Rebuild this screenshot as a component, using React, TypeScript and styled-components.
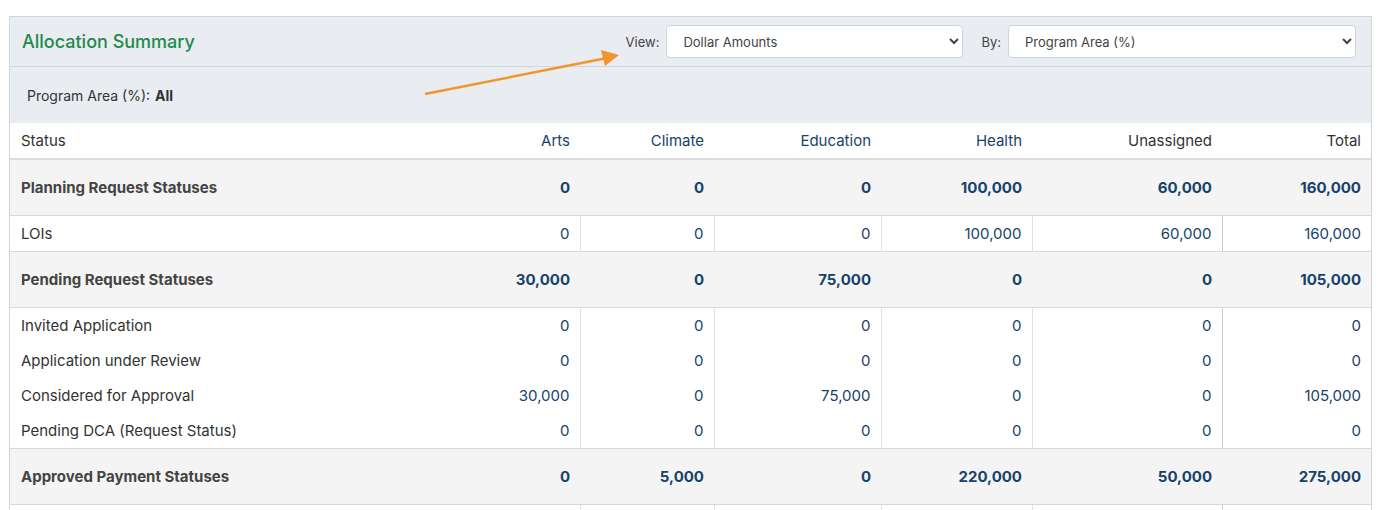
import styled, { createGlobalStyle } from 'styled-components';

const Global = createGlobalStyle`
  body { margin: 0; background: #fff; font-family: Inter, "Noto Sans", sans-serif; color: #333; }
`;

type Row = { label: string; values: (number | null)[]; group?: boolean };

const rows: Row[] = [
	{ label: 'Planning Request Statuses', values: [0, 0, 0, 100000, 60000, 160000], group: true },
	{ label: 'LOIs', values: [0, 0, 0, 100000, 60000, 160000] },
	{ label: 'Pending Request Statuses', values: [30000, 0, 75000, 0, 0, 105000], group: true },
	{ label: 'Invited Application', values: [0, 0, 0, 0, 0, 0] },
	{ label: 'Application under Review', values: [0, 0, 0, 0, 0, 0] },
	{ label: 'Considered for Approval', values: [30000, 0, 75000, 0, 0, 105000] },
	{ label: 'Pending DCA (Request Status)', values: [0, 0, 0, 0, 0, 0] },
	{ label: 'Approved Payment Statuses', values: [0, 5000, 0, 220000, 50000, 275000], group: true },
	{ label: '', values: [null, null, null, null, null, null] },
];

const columns = ['Arts', 'Climate', 'Education', 'Health', 'Unassigned', 'Total'];
const widths = [120, 134, 167, 151, 190, 149];

export default function App() {
	return (
		<Page>
			<Global />
			<Panel>
				<Header>
					<Title>Allocation Summary</Title>
					<Controls>
						<Label>View:</Label>
						<Select $w={297}>
							<option>Dollar Amounts</option>
						</Select>
						<Label>By:</Label>
						<Select $w={348}>
							<option>Program Area (%)</option>
						</Select>
					</Controls>
				</Header>
				<FilterBar>
					Program Area (%): <b>All</b>
				</FilterBar>
				<Table>
					<colgroup>
						<col />
						{widths.map((w, i) => (
							<col key={i} style={{ width: w }} />
						))}
					</colgroup>
					<thead>
						<tr>
							<Th>Status</Th>
							{columns.map((c, i) => (
								<Th key={c} $right $plain={i >= 4}>
									{c}
								</Th>
							))}
						</tr>
					</thead>
					<tbody>
						{rows.map((r, ri) => {
							const first = !r.group && (ri === 0 || rows[ri - 1].group);
							return (
								<Tr key={ri} $group={r.group}>
									<Td $group={r.group} $first={first}>
										{r.label}
									</Td>
									{r.values.map((v, i) => (
										<Td
											key={i}
											$num
											$group={r.group}
											$first={first}
											$divider={!r.group && i > 0 && i !== 5}
											$totalDivider={!r.group && i === 5}
										>
											{v === null ? '' : v.toLocaleString('en-US')}
										</Td>
									))}
								</Tr>
							);
						})}
					</tbody>
				</Table>
				<Arrow width="220" height="60" viewBox="0 0 220 60">
					<line x1="4" y1="56" x2="186" y2="20" stroke="#f0962e" strokeWidth="2.5" />
					<polygon points="198,17 180,12 184,28" fill="#f0962e" />
				</Arrow>
			</Panel>
		</Page>
	);
}

const Page = styled.div`
	padding: 16px 13px 0 9px;
	height: 510px;
	overflow: hidden;
	box-sizing: border-box;
`;

const Panel = styled.div`
	position: relative;
	border: 1px solid #d0d3d8;
	border-bottom: none;
`;

const Header = styled.div`
	display: flex;
	align-items: center;
	justify-content: space-between;
	height: 49px;
	padding: 0 15px 0 12px;
	background: #e9ecf0;
	border-bottom: 1px solid #d3d6da;
`;

const Title = styled.h2`
	margin: 0;
	font-size: 18px;
	font-weight: 500;
	color: #1f8a4c;
`;

const Controls = styled.div`
	display: flex;
	align-items: center;
	gap: 7px;
`;

const Label = styled.span`
	font-size: 13px;
	color: #444;
	margin-left: 11px;
`;

const Select = styled.select<{ $w: number }>`
	width: ${(p) => p.$w}px;
	height: 33px;
	padding: 0 10px 0 12px;
	font-family: Inter, sans-serif;
	font-size: 13px;
	color: #444;
	background: #fff;
	border: 1px solid #cfd3d8;
	border-radius: 4px;
`;

const FilterBar = styled.div`
	height: 56px;
	display: flex;
	align-items: center;
	gap: 5px;
	padding-left: 17px;
	background: #e9ecf0;
	font-size: 14px;
	color: #333;
	b {
		font-weight: 700;
	}
`;

const Table = styled.table`
	width: 100%;
	border-collapse: collapse;
	table-layout: fixed;
	font-size: 15px;
`;

const Th = styled.th<{ $right?: boolean; $plain?: boolean }>`
	height: 35px;
	padding: 0 10px 0 11px;
	text-align: ${(p) => (p.$right ? 'right' : 'left')};
	font-weight: 400;
	color: ${(p) => (p.$right && !p.$plain ? '#17426b' : '#333')};
	background: #fff;
	border-bottom: 2px solid #dcdcdc;
`;

const Tr = styled.tr<{ $group?: boolean }>`
	background: ${(p) => (p.$group ? '#f4f4f4' : '#fff')};
`;

const Td = styled.td<{
	$num?: boolean;
	$group?: boolean;
	$first?: boolean;
	$divider?: boolean;
	$totalDivider?: boolean;
}>`
	height: ${(p) => (p.$group ? '55px' : '35px')};
	padding: 0 10px 0 11px;
	text-align: ${(p) => (p.$num ? 'right' : 'left')};
	font-weight: ${(p) => (p.$group ? 700 : 400)};
	color: ${(p) => (p.$num ? '#17426b' : p.$group ? '#444' : '#333')};
	border-top: ${(p) => (p.$group || p.$first ? '1px solid #d8d8d8' : 'none')};
	border-left: ${(p) => (p.$divider ? '1px solid #e2e2e2' : p.$totalDivider ? '1px solid #cfcfcf' : 'none')};
`;

const Arrow = styled.svg`
	position: absolute;
	left: 411px;
	top: 21px;
	pointer-events: none;
`;
